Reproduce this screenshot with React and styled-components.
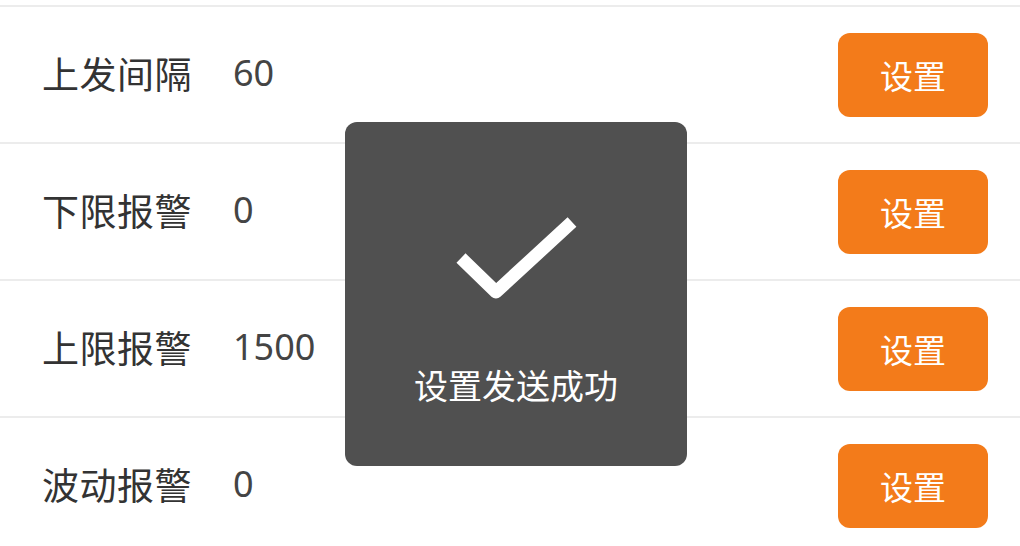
import React from 'react'
import styled, { createGlobalStyle } from 'styled-components'

const GlobalStyle = createGlobalStyle`
  html, body {
    margin: 0;
    padding: 0;
    background: #fff;
  }
  body {
    font-family: "Noto Sans", "Noto Sans CJK SC", sans-serif;
    color: #333;
  }
`

const Page = styled.div`
  position: relative;
  width: 1020px;
  height: 546px;
  overflow: hidden;
  padding-top: 5px;
  box-sizing: border-box;
`

const List = styled.div`
  border-top: 2px solid #ececec;
`

const Row = styled.div`
  display: flex;
  align-items: center;
  height: 135px;
  padding: 0 32px 0 42px;
  border-bottom: 2px solid #ececec;
`

const Label = styled.span`
  font-size: 37px;
  width: 191px;
  margin-top: -4px;
  color: #333;
  letter-spacing: 0.5px;
`

const Value = styled.span`
  flex: 1;
  font-size: 36px;
  margin-top: -4px;
  color: #444;
`

const SetButton = styled.button`
  width: 150px;
  height: 84px;
  border: none;
  border-radius: 12px;
  background: #f37b1a;
  color: #fff;
  font-family: "Noto Sans CJK SC", sans-serif;
  font-size: 33px;
  cursor: pointer;
`

const Toast = styled.div`
  position: absolute;
  left: 345px;
  top: 122px;
  width: 342px;
  height: 344px;
  border-radius: 12px;
  background: #505050;
  display: flex;
  flex-direction: column;
  align-items: center;
`

const CheckIcon = styled.svg`
  margin-top: 90px;
  width: 140px;
  height: 100px;
`

const ToastText = styled.div`
  margin-top: 48px;
  font-family: "Noto Sans CJK SC", sans-serif;
  font-size: 34px;
  color: #fff;
`

const rows = [
  { label: '上发间隔', value: '60' },
  { label: '下限报警', value: '0' },
  { label: '上限报警', value: '1500' },
  { label: '波动报警', value: '0' },
]

export default function App() {
  return (
    <Page>
      <GlobalStyle />
      <List>
        {rows.map((r) => (
          <Row key={r.label}>
            <Label>{r.label}</Label>
            <Value>{r.value}</Value>
            <SetButton>设置</SetButton>
          </Row>
        ))}
      </List>
      <Toast>
        <CheckIcon viewBox="0 0 140 100">
          <path
            d="M15 46 L50 80 L126 10"
            fill="none"
            stroke="#fff"
            strokeWidth="13"
            strokeLinecap="butt"
            strokeLinejoin="round"
          />
        </CheckIcon>
        <ToastText>设置发送成功</ToastText>
      </Toast>
    </Page>
  )
}
